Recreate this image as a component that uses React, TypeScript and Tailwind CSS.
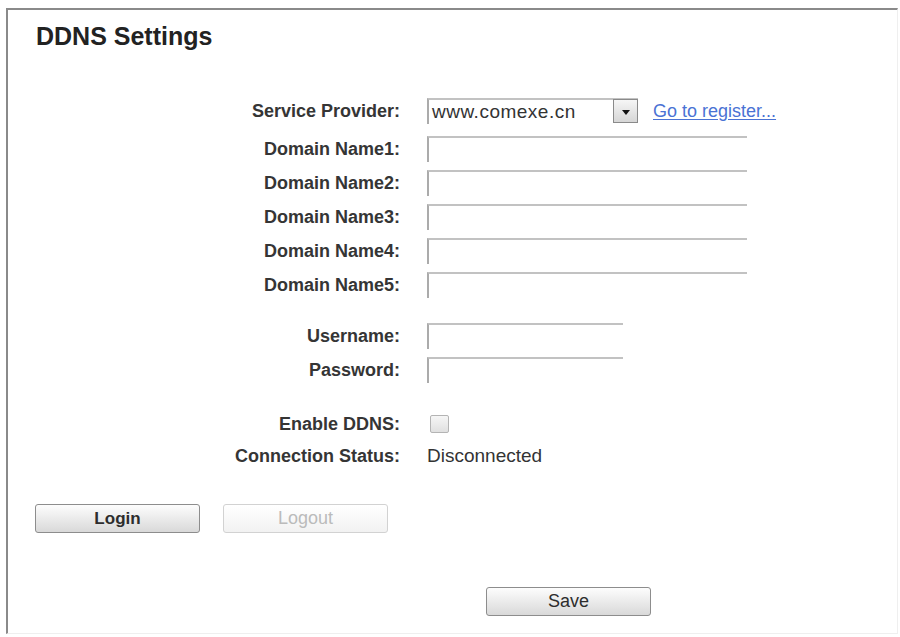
import type { ReactNode } from "react";

const font = "font-['Liberation_Sans',Arial,sans-serif]";

function Row({ label, h = "h-[34px]", children }: { label: string; h?: string; children?: ReactNode }) {
  return (
    <div className={`flex items-center ${h}`}>
      <div className="w-[392px] text-right text-[18px] font-bold text-[#353535]">{label}</div>
      <div className="ml-[27px] flex items-center">{children}</div>
    </div>
  );
}

function TextBox({ w }: { w: string }) {
  return (
    <div className={`${w} h-[26px] border-t-2 border-l-2 border-t-[#c2c2c2] border-l-[#ababab] bg-white`} />
  );
}

function Button({ label, disabled, bold }: { label: string; disabled?: boolean; bold?: boolean }) {
  return (
    <button
      disabled={disabled}
      className={
        disabled
          ? "w-[165px] h-[29px] rounded-[3px] border border-[#d2d2d2] bg-gradient-to-b from-white to-[#f2f2f2] text-[18px] text-[#bbbbbb]"
          : `w-[165px] h-[29px] rounded-[3px] border border-[#8d8d8d] bg-gradient-to-b from-[#fdfdfd] to-[#d9d9d9] text-[#2d2d2d] ${
              bold ? "text-[17px] font-bold" : "text-[18px]"
            }`
      }
    >
      {label}
    </button>
  );
}

export default function App() {
  return (
    <div className={`w-[900px] h-[637px] bg-white pt-[8px] pl-[6px] ${font}`}>
      <div className="w-[892px] h-[626px] border-t-2 border-l-2 border-t-[#8a8a8a] border-l-[#8a8a8a] border-r border-b border-r-[#efefef] border-b-[#efefef]">
        <h1 className="pt-[12px] pl-[28px] text-[25px] leading-[28px] font-bold text-[#222]">DDNS Settings</h1>

        <div className="mt-[44px]">
          <Row label="Service Provider:">
            {/* select with dropdown arrow */}
            <div className="flex w-[211px] h-[26px] border-t-2 border-l-2 border-t-[#c2c2c2] border-l-[#ababab]">
              <span className="flex-1 pl-[3px] text-[19px] tracking-[0.5px] leading-[24px] text-[#333]">www.comexe.cn</span>
              <span className="flex items-center justify-center w-[25px] h-[24px] -mt-[1px] border border-[#8a8a8a] bg-gradient-to-b from-[#f6f6f6] to-[#d6d6d6]">
                <svg width="8" height="5" viewBox="0 0 8 5" className="mt-[2px]">
                  <path d="M0 0h8L4 5z" fill="#111" />
                </svg>
              </span>
            </div>
            <a href="#" className="ml-[15px] text-[18px] text-[#4a72d4] underline underline-offset-2">
              Go to register...
            </a>
          </Row>
        </div>

        <div className="mt-[4px]">
          {[1, 2, 3, 4, 5].map((n) => (
            <Row key={n} label={`Domain Name${n}:`}>
              <TextBox w="w-[320px]" />
            </Row>
          ))}
        </div>

        <div className="mt-[17px]">
          <Row label="Username:">
            <TextBox w="w-[196px]" />
          </Row>
          <Row label="Password:">
            <TextBox w="w-[196px]" />
          </Row>
        </div>

        <div className="mt-[21px]">
          <Row label="Enable DDNS:" h="h-[32px]">
            <span className="ml-[3px] w-[19px] h-[18px] rounded-[2px] border border-[#b4b4b4] bg-gradient-to-b from-[#f6f6f6] to-[#e0e0e0]" />
          </Row>
          <Row label="Connection Status:" h="h-[32px]">
            <span className="text-[19px] text-[#333]">Disconnected</span>
          </Row>
        </div>

        <div className="mt-[32px] pl-[27px] flex gap-[23px]">
          <Button label="Login" bold />
          <Button label="Logout" disabled />
        </div>

        <div className="mt-[54px] pl-[478px]">
          <Button label="Save" />
        </div>
      </div>
    </div>
  );
}
